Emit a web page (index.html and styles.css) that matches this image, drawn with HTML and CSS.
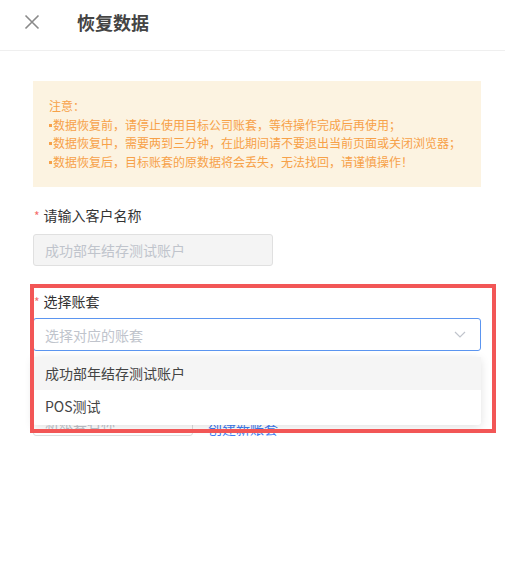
FILE: index.html
```html
<!DOCTYPE html>
<html lang="zh-CN">
<head>
<meta charset="utf-8">
<title>恢复数据</title>
<link rel="stylesheet" href="styles.css">
</head>
<body>
<div class="page">
  <header class="header">
    <svg class="close" width="16" height="16" viewBox="0 0 16 16"><path d="M1.5 1.5 L14.5 14.5 M14.5 1.5 L1.5 14.5" stroke="#8a8a8a" stroke-width="1.6" fill="none"/></svg>
    <h1 class="title">恢复数据</h1>
  </header>
  <main class="content">
    <div class="notice">
      <p>注意：</p>
      <p><span class="dot"></span>数据恢复前，请停止使用目标公司账套，等待操作完成后再使用；</p>
      <p><span class="dot"></span>数据恢复中，需要两到三分钟，在此期间请不要退出当前页面或关闭浏览器；</p>
      <p><span class="dot"></span>数据恢复后，目标账套的原数据将会丢失，无法找回，请谨慎操作！</p>
    </div>

    <div class="field field-first">
      <label class="label"><span class="req">*</span>请输入客户名称</label>
      <div class="input input-disabled">成功部年结存测试账户</div>
    </div>

    <div class="field field-select">
      <label class="label"><span class="req">*</span>选择账套</label>
      <div class="select-wrap">
        <div class="input select">
          <span class="ph">选择对应的账套</span>
          <svg class="chev" width="12" height="7" viewBox="0 0 12 7"><path d="M1 1 L6 6 L11 1" stroke="#c0c4cc" stroke-width="1.2" fill="none"/></svg>
        </div>
        <ul class="dropdown">
          <li class="opt opt-hover">成功部年结存测试账户</li>
          <li class="opt">POS测试</li>
        </ul>
      </div>
      <div class="row-behind">
        <div class="input input-small">新账套名称</div>
        <a class="link">创建新账套</a>
      </div>
    </div>
    <div class="annot"></div>
  </main>
</div>
</body>
</html>
```

FILE: styles.css
```css
* { box-sizing: border-box; margin: 0; padding: 0; }
html, body { background: #fff; }
body {
  font-family: "Noto Sans CJK SC", "Microsoft YaHei", sans-serif;
  color: #333;
  width: 505px;
  height: 571px;
  overflow: hidden;
}
.page { position: relative; }
.header {
  height: 51px;
  border-bottom: 1px solid #efefef;
  display: flex;
  align-items: center;
  padding-left: 24px;
  padding-bottom: 7px;
}
.close { display: block; }
.title {
  margin-left: 37px;
  font-size: 18px;
  font-weight: 700;
  color: #444;
  line-height: 24px;
}
.content {
  position: relative;
  padding: 30px 24px 0 33px;
}
.notice {
  background: #fcf3e1;
  padding: 16px 16px 16px 16px;
  height: 106px;
  color: #f7a148;
  font-size: 12px;
  line-height: 18.6px;
}
.notice p { white-space: nowrap; }
.dot {
  display: inline-block;
  width: 3px;
  height: 3px;
  background: #f7a148;
  vertical-align: middle;
  margin-right: 1px;
  position: relative;
  top: -1px;
}
.field-first { margin-top: 17px; }
.field-select { margin-top: 24px; position: relative; }
.label {
  display: block;
  font-size: 14px;
  line-height: 22px;
  color: #333;
  margin-bottom: 7px;
}
.field-select .label { margin-bottom: 5px; }
.req {
  color: #f56c6c;
  font-size: 12px;
  margin-right: 4px;
  margin-left: 1px;
}
.input {
  height: 32px;
  border: 1px solid #dcdcdc;
  border-radius: 3px;
  font-size: 14px;
  line-height: 30px;
  padding: 0 11px;
  color: #c0c4cc;
}
.input-disabled {
  width: 240px;
  background: #f4f4f4;
  border-color: #e0e0e0;
}
.select-wrap { position: relative; z-index: 2; }
.select {
  height: 33px;
  width: 448px;
  border-color: #5b95f0;
  display: flex;
  align-items: center;
  justify-content: space-between;
  padding-right: 14px;
}
.ph { color: #c0c4cc; }
.chev { display: block; }
.dropdown {
  list-style: none;
  position: absolute;
  left: 0;
  top: 39px;
  width: 448px;
  background: #fff;
  border-radius: 3px;
  box-shadow: 0 2px 10px rgba(0,0,0,0.12);
  padding-bottom: 2px;
}
.opt {
  height: 33px;
  line-height: 33px;
  padding: 0 12px;
  font-size: 14px;
  color: #444;
}
.opt-hover { background: #f5f5f5; }
.row-behind {
  display: flex;
  align-items: flex-end;
  margin-top: 53px;
}
.input-small {
  width: 160px;
  color: #c0c4cc;
  line-height: 22px;
  padding-top: 6px;
}
.link {
  margin-left: 15px;
  font-size: 14px;
  line-height: 14px;
  margin-bottom: 1px;
  color: #3e7cf2;
}
.annot {
  position: absolute;
  left: 30px;
  top: 233px;
  width: 466px;
  height: 149px;
  border: 4px solid #f25656;
  z-index: 5;
  pointer-events: none;
}
```
